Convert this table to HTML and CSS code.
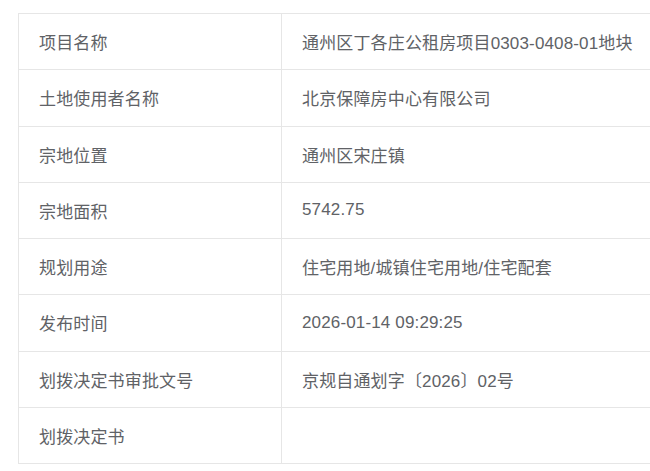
FILE: index.html
```html
<!DOCTYPE html>
<html lang="zh-CN">
<head>
<meta charset="utf-8">
<title>地块信息</title>
<link rel="stylesheet" href="styles.css">
</head>
<body>
<div class="info">
  <div class="label">项目名称</div><div class="value">通州区丁各庄公租房项目0303-0408-01地块</div>
  <div class="label">土地使用者名称</div><div class="value">北京保障房中心有限公司</div>
  <div class="label">宗地位置</div><div class="value">通州区宋庄镇</div>
  <div class="label">宗地面积</div><div class="value">5742.75</div>
  <div class="label">规划用途</div><div class="value">住宅用地/城镇住宅用地/住宅配套</div>
  <div class="label">发布时间</div><div class="value">2026-01-14 09:29:25</div>
  <div class="label">划拨决定书审批文号</div><div class="value">京规自通划字〔2026〕02号</div>
  <div class="label">划拨决定书</div><div class="value"></div>
</div>
</body>
</html>
```
FILE: styles.css
```css
html, body {
  margin: 0;
  background: #fff;
}
body {
  padding: 13px 0 0 18px;
  font-family: "Liberation Sans", "Noto Sans CJK SC", sans-serif;
  font-size: 17px;
  color: #606266;
}
.info {
  display: grid;
  grid-template-columns: 263px 1fr;
  grid-auto-rows: 56.25px;
  border-top: 1px solid #e6e6e6;
  border-left: 1px solid #e6e6e6;
}
.label, .value {
  box-sizing: border-box;
  display: flex;
  align-items: center;
  padding: 0 20px;
  border-bottom: 1px solid #e6e6e6;
  white-space: nowrap;
  letter-spacing: 0.15px;
}
.label {
  border-right: 1px solid #e6e6e6;
}
```
